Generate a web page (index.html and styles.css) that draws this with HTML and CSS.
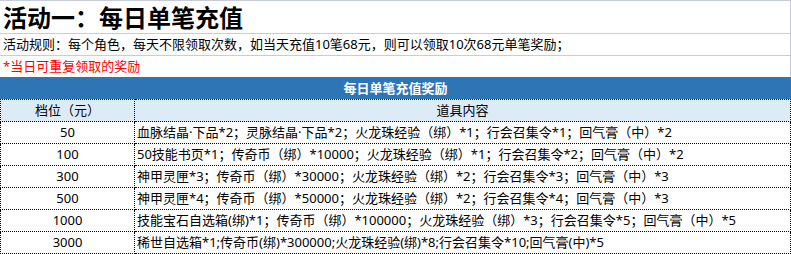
FILE: index.html
```html
<!DOCTYPE html>
<html lang="zh-CN">
<head>
<meta charset="utf-8">
<title>活动一：每日单笔充值</title>
<link rel="stylesheet" href="styles.css">
</head>
<body>
<div class="sheet">
  <div class="row title">活动一：每日单笔充值</div>
  <div class="row rule">活动规则：每个角色，每天不限领取次数，如当天充值10笔68元，则可以领取10次68元单笔奖励；</div>
  <div class="row note">*当日可重复领取的奖励</div>
  <div class="banner">每日单笔充值奖励</div>
  <table class="rewards">
    <thead>
      <tr><th class="tier">档位（元）</th><th class="items-h">道具内容</th></tr>
    </thead>
    <tbody>
      <tr><td class="tier">50</td><td>血脉结晶·下品*2；灵脉结晶·下品*2；火龙珠经验（绑）*1；行会召集令*1；回气膏（中）*2</td></tr>
      <tr><td class="tier">100</td><td>50技能书页*1；传奇币（绑）*10000；火龙珠经验（绑）*1；行会召集令*2；回气膏（中）*2</td></tr>
      <tr><td class="tier">300</td><td>神甲灵匣*3；传奇币（绑）*30000；火龙珠经验（绑）*2；行会召集令*3；回气膏（中）*3</td></tr>
      <tr><td class="tier">500</td><td>神甲灵匣*4；传奇币（绑）*50000；火龙珠经验（绑）*2；行会召集令*4；回气膏（中）*3</td></tr>
      <tr><td class="tier">1000</td><td>技能宝石自选箱(绑)*1；传奇币（绑）*100000；火龙珠经验（绑）*3；行会召集令*5；回气膏（中）*5</td></tr>
      <tr><td class="tier">3000</td><td>稀世自选箱*1;传奇币(绑)*300000;火龙珠经验(绑)*8;行会召集令*10;回气膏(中)*5</td></tr>
    </tbody>
  </table>
</div>
</body>
</html>
```

FILE: styles.css
```css
* { box-sizing: border-box; }
html, body { margin: 0; padding: 0; background: #fff; }
body {
  font-family: "Noto Sans", "Noto Sans CJK SC", sans-serif;
  font-size: 13px;
  color: #000;
}
.sheet {
  width: 791px;
}
.row {
  display: flex;
  align-items: center;
  padding-left: 3px;
  border-right: 1px solid #c6ccd9;
  border-bottom: 1px solid #c6ccd9;
  white-space: nowrap;
  line-height: 1;
}
.title {
  height: 34px;
  border-top: 1px solid #c6ccd9;
  font-size: 24px;
  font-weight: bold;
  padding-top: 1px;
}
.rule {
  height: 22px;
}
.note {
  height: 21px;
  border-bottom: none;
  color: #ff0000;
}
.banner {
  height: 22px;
  background: #2e75b6;
  color: #fff;
  font-weight: bold;
  display: flex;
  align-items: center;
  justify-content: center;
  line-height: 1;
}
.rewards {
  width: 791px;
  border-collapse: collapse;
  table-layout: fixed;
}
.rewards th, .rewards td {
  border: 1px dotted #000;
  height: 22px;
  padding: 0 2px;
  font-weight: normal;
  line-height: 1;
  white-space: nowrap;
  vertical-align: middle;
  text-align: left;
}
.rewards thead th {
  background: #ddebf7;
  text-align: center;
}
.rewards .tier {
  width: 134px;
  text-align: center;
}
```
